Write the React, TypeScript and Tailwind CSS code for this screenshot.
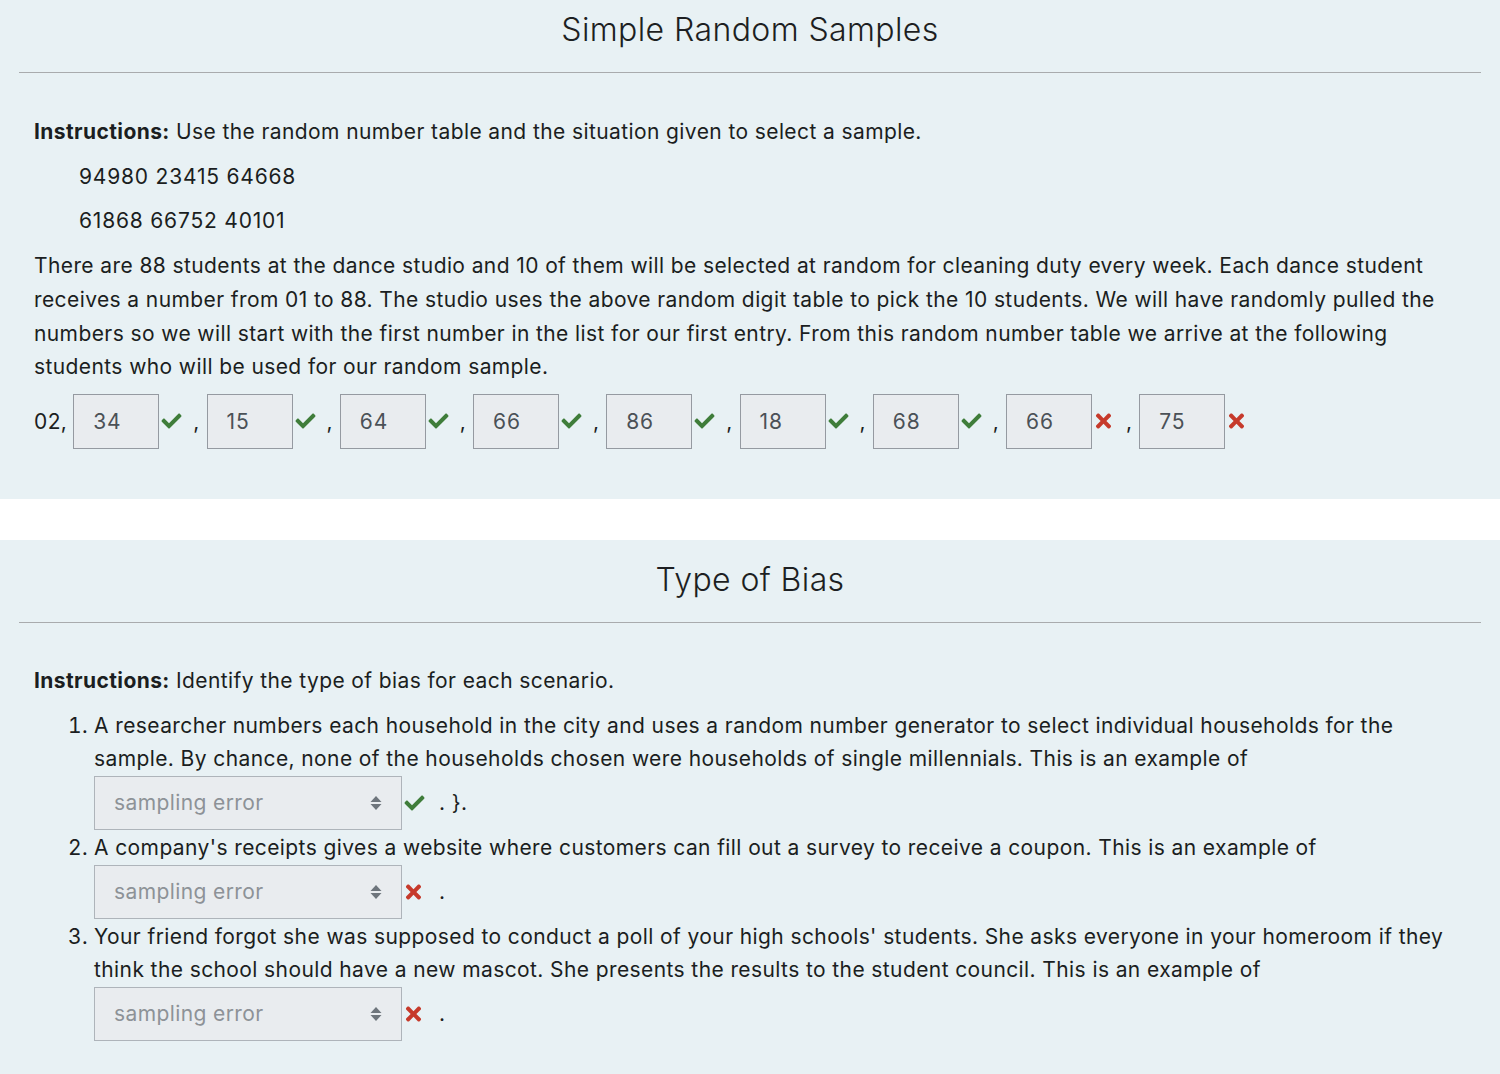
import React from "react";
import { FaCheck, FaTimes } from "react-icons/fa";

const font = { fontFamily: "Inter, 'Noto Sans', sans-serif" };

function Check() {
  return (
    <span className="flex w-[23px] shrink-0 items-center pl-[2px]">
      <FaCheck className="h-[20px] w-[21px] text-[#3f7d3a]" />
    </span>
  );
}
function Cross() {
  return (
    <span className="flex w-[23px] shrink-0 items-center pl-[3px]">
      <FaTimes className="h-[22px] w-[17px] text-[#c63a2b]" />
    </span>
  );
}

function NumInput({ v, ok, last }: { v: string; ok: boolean; last?: boolean }) {
  return (
    <>
      <div className="flex h-[55px] w-[86px] shrink-0 items-center border border-[#959aa1] bg-[#e9ecef] pl-[19px] tracking-[0.8px] text-[#4b5157]">
        {v}
      </div>
      {ok ? <Check /> : <Cross />}
      {!last && <span className="w-[24.25px] shrink-0 pl-[11px]">,</span>}
    </>
  );
}

function SortIcon() {
  return (
    <svg width="12" height="16" viewBox="0 0 12 16" className="shrink-0">
      <path d="M6 1 L11.5 7 H0.5 Z" fill="#6e757c" />
      <path d="M6 15 L11.5 9 H0.5 Z" fill="#6e757c" />
    </svg>
  );
}

function Select({ ok, brace }: { ok: boolean; brace?: boolean }) {
  return (
    <div className="mb-[1px] flex h-[54px] items-center">
      <div className="flex h-[54px] w-[308px] items-center justify-between border border-[#aeb4ba] bg-[#e9ecef] pl-[19px] pr-[19px] text-[#8d9297]">
        <span>sampling error</span>
        <SortIcon />
      </div>
      {ok ? <Check /> : <Cross />}
      <span className="ml-[14px] whitespace-pre">{brace ? ". }." : "."}</span>
    </div>
  );
}

export default function App() {
  const nums: [string, boolean][] = [
    ["34", true],
    ["15", true],
    ["64", true],
    ["66", true],
    ["86", true],
    ["18", true],
    ["68", true],
    ["66", false],
    ["75", false],
  ];
  return (
    <div style={font} className="min-h-[1074px] bg-white text-[21px] tracking-[0.4px] text-[#1b1e21]">
      <section className="bg-[#e8f1f4] px-[19px] pb-[50px]">
        <h1 className="pt-[6px] text-center text-[32px] font-light leading-[48px] tracking-[0.4px] text-[#1d1f22]">
          Simple Random Samples
        </h1>
        <hr className="mt-[18px] border-0 border-t border-[#a9abad]" />
        <div className="px-[15px] pt-[42px] leading-[33.7px]">
          <p className="mb-[11px]">
            <b className="font-bold">Instructions:</b> Use the random number table and the situation given to select a sample.
          </p>
          <p className="mb-[11px] pl-[45px] tracking-[0.8px]">94980 23415 64668</p>
          <p className="mb-[11px] pl-[45px] tracking-[0.8px]">61868 66752 40101</p>
          <p className="mb-[10px]">
            There are 88 students at the dance studio and 10 of them will be selected at random for cleaning duty every week. Each dance student receives a number from 01 to 88. The studio uses the above random digit table to pick the 10 students. We will have randomly pulled the numbers so we will start with the first number in the list for our first entry. From this random number table we arrive at the following students who will be used for our random sample.
          </p>
          <div className="flex items-center">
            <span className="mr-[6px]">02,</span>
            {nums.map(([v, ok], i) => (
              <NumInput key={i} v={v} ok={ok} last={i === nums.length - 1} />
            ))}
          </div>
        </div>
      </section>
      <div className="h-[41px] bg-white" />
      <section className="bg-[#e8f1f4] px-[19px] pb-[34px]">
        <h1 className="pt-[16px] text-center text-[32px] font-light leading-[48px] tracking-[0.4px] text-[#1d1f22]">
          Type of Bias
        </h1>
        <hr className="mt-[18px] border-0 border-t border-[#a9abad]" />
        <div className="px-[15px] pt-[41px] leading-[33.7px]">
          <p className="mb-[11px]">
            <b className="font-bold">Instructions:</b> Identify the type of bias for each scenario.
          </p>
          <ol className="list-decimal pl-[60px]">
            <li>
              A researcher numbers each household in the city and uses a random number generator to select individual households for the sample. By chance, none of the households chosen were households of single millennials. This is an example of
              <Select ok brace />
            </li>
            <li>
              A company's receipts gives a website where customers can fill out a survey to receive a coupon. This is an example of
              <Select ok={false} />
            </li>
            <li>
              Your friend forgot she was supposed to conduct a poll of your high schools' students. She asks everyone in your homeroom if they think the school should have a new mascot. She presents the results to the student council. This is an example of
              <Select ok={false} />
            </li>
          </ol>
        </div>
      </section>
    </div>
  );
}
